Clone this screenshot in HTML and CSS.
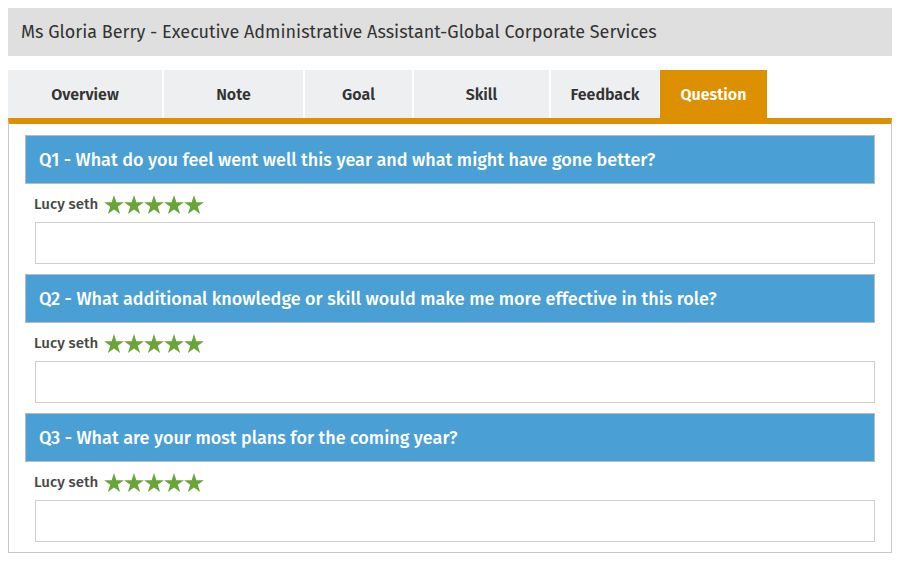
FILE: index.html
```html
<!DOCTYPE html>
<html lang="en">
<head>
  <meta charset="UTF-8">
  <title>Questions</title>
  <link rel="stylesheet" href="styles.css">
</head>
<body>

  <div id="title-bar">Ms Gloria Berry - Executive Administrative Assistant-Global Corporate Services</div>

  <div id="tabs">
    <div class="tab tab-overview">Overview</div>
    <div class="tab tab-note">Note</div>
    <div class="tab tab-goal">Goal</div>
    <div class="tab tab-skill">Skill</div>
    <div class="tab tab-feedback">Feedback</div>
    <div class="tab tab-question active">Question</div>
  </div>

  <div id="panel">
    <div class="question">
      <div class="question-title">Q1 - What do you feel went well this year and what might have gone better?</div>
      <div class="reviewer">
        <span class="reviewer-name">Lucy seth</span>
        <span class="stars">
          <svg viewBox="0 0 20 19"><polygon points="10,0 12.35,7.2 19.9,7.2 13.8,11.65 16.15,18.9 10,14.4 3.85,18.9 6.2,11.65 0.1,7.2 7.65,7.2"/></svg>
          <svg viewBox="0 0 20 19"><polygon points="10,0 12.35,7.2 19.9,7.2 13.8,11.65 16.15,18.9 10,14.4 3.85,18.9 6.2,11.65 0.1,7.2 7.65,7.2"/></svg>
          <svg viewBox="0 0 20 19"><polygon points="10,0 12.35,7.2 19.9,7.2 13.8,11.65 16.15,18.9 10,14.4 3.85,18.9 6.2,11.65 0.1,7.2 7.65,7.2"/></svg>
          <svg viewBox="0 0 20 19"><polygon points="10,0 12.35,7.2 19.9,7.2 13.8,11.65 16.15,18.9 10,14.4 3.85,18.9 6.2,11.65 0.1,7.2 7.65,7.2"/></svg>
          <svg viewBox="0 0 20 19"><polygon points="10,0 12.35,7.2 19.9,7.2 13.8,11.65 16.15,18.9 10,14.4 3.85,18.9 6.2,11.65 0.1,7.2 7.65,7.2"/></svg>
        </span>
      </div>
      <div class="answer"></div>
    </div>

    <div class="question">
      <div class="question-title">Q2 - What additional knowledge or skill would make me more effective in this role?</div>
      <div class="reviewer">
        <span class="reviewer-name">Lucy seth</span>
        <span class="stars">
          <svg viewBox="0 0 20 19"><polygon points="10,0 12.35,7.2 19.9,7.2 13.8,11.65 16.15,18.9 10,14.4 3.85,18.9 6.2,11.65 0.1,7.2 7.65,7.2"/></svg>
          <svg viewBox="0 0 20 19"><polygon points="10,0 12.35,7.2 19.9,7.2 13.8,11.65 16.15,18.9 10,14.4 3.85,18.9 6.2,11.65 0.1,7.2 7.65,7.2"/></svg>
          <svg viewBox="0 0 20 19"><polygon points="10,0 12.35,7.2 19.9,7.2 13.8,11.65 16.15,18.9 10,14.4 3.85,18.9 6.2,11.65 0.1,7.2 7.65,7.2"/></svg>
          <svg viewBox="0 0 20 19"><polygon points="10,0 12.35,7.2 19.9,7.2 13.8,11.65 16.15,18.9 10,14.4 3.85,18.9 6.2,11.65 0.1,7.2 7.65,7.2"/></svg>
          <svg viewBox="0 0 20 19"><polygon points="10,0 12.35,7.2 19.9,7.2 13.8,11.65 16.15,18.9 10,14.4 3.85,18.9 6.2,11.65 0.1,7.2 7.65,7.2"/></svg>
        </span>
      </div>
      <div class="answer"></div>
    </div>

    <div class="question">
      <div class="question-title">Q3 - What are your most plans for the coming year?</div>
      <div class="reviewer">
        <span class="reviewer-name">Lucy seth</span>
        <span class="stars">
          <svg viewBox="0 0 20 19"><polygon points="10,0 12.35,7.2 19.9,7.2 13.8,11.65 16.15,18.9 10,14.4 3.85,18.9 6.2,11.65 0.1,7.2 7.65,7.2"/></svg>
          <svg viewBox="0 0 20 19"><polygon points="10,0 12.35,7.2 19.9,7.2 13.8,11.65 16.15,18.9 10,14.4 3.85,18.9 6.2,11.65 0.1,7.2 7.65,7.2"/></svg>
          <svg viewBox="0 0 20 19"><polygon points="10,0 12.35,7.2 19.9,7.2 13.8,11.65 16.15,18.9 10,14.4 3.85,18.9 6.2,11.65 0.1,7.2 7.65,7.2"/></svg>
          <svg viewBox="0 0 20 19"><polygon points="10,0 12.35,7.2 19.9,7.2 13.8,11.65 16.15,18.9 10,14.4 3.85,18.9 6.2,11.65 0.1,7.2 7.65,7.2"/></svg>
          <svg viewBox="0 0 20 19"><polygon points="10,0 12.35,7.2 19.9,7.2 13.8,11.65 16.15,18.9 10,14.4 3.85,18.9 6.2,11.65 0.1,7.2 7.65,7.2"/></svg>
        </span>
      </div>
      <div class="answer"></div>
    </div>
  </div>

</body>
</html>
```

FILE: styles.css
```css
* {
  box-sizing: border-box;
}

body {
  margin: 8px;
  background-color: #fff;
  font-family: 'Fira Sans', Lato, 'Open Sans', sans-serif;
  color: #333;
}

#title-bar {
  height: 48px;
  padding: 1px 13px 0 13px;
  background-color: #dfdfdf;
  font-size: 18px;
  line-height: 47px;
  color: #333;
}

#tabs {
  display: flex;
  gap: 2px;
  margin-top: 14px;
}

.tab {
  height: 48px;
  padding-top: 2px;
  background-color: #eeeff1;
  font-size: 16px;
  font-weight: 600;
  line-height: 46px;
  text-align: center;
  color: #333;
}

.tab-overview { width: 154px; }
.tab-note { width: 139px; }
.tab-goal { width: 107px; }
.tab-skill { width: 135px; }
.tab-feedback { width: 108px; margin-right: -1px; }
.tab-question { width: 107px; }

.tab.active {
  background-color: #dc9000;
  color: #fff;
}

#panel {
  border: 1px solid #c8c8c8;
  border-top: 6px solid #dc9000;
  padding: 11px 16px 10px 16px;
}

.question + .question {
  margin-top: 10px;
}

.question-title {
  height: 49px;
  padding: 2px 13px 0 13px;
  background-color: #4a9fd4;
  border: 1px solid #b4bcc4;
  font-size: 18px;
  font-weight: 500;
  line-height: 45px;
  color: #fff;
}

.reviewer {
  display: flex;
  align-items: center;
  gap: 6px;
  height: 38px;
  padding: 2px 8px 0 9px;
}

.reviewer-name {
  font-size: 15px;
  font-weight: 500;
  color: #474747;
}

.stars {
  display: flex;
  gap: 0;
}

.stars svg {
  width: 20px;
  height: 19px;
  fill: #6aa53a;
}

.answer {
  height: 42px;
  margin-left: 10px;
  border: 1px solid #cfcfcf;
  background-color: #fff;
}
```
